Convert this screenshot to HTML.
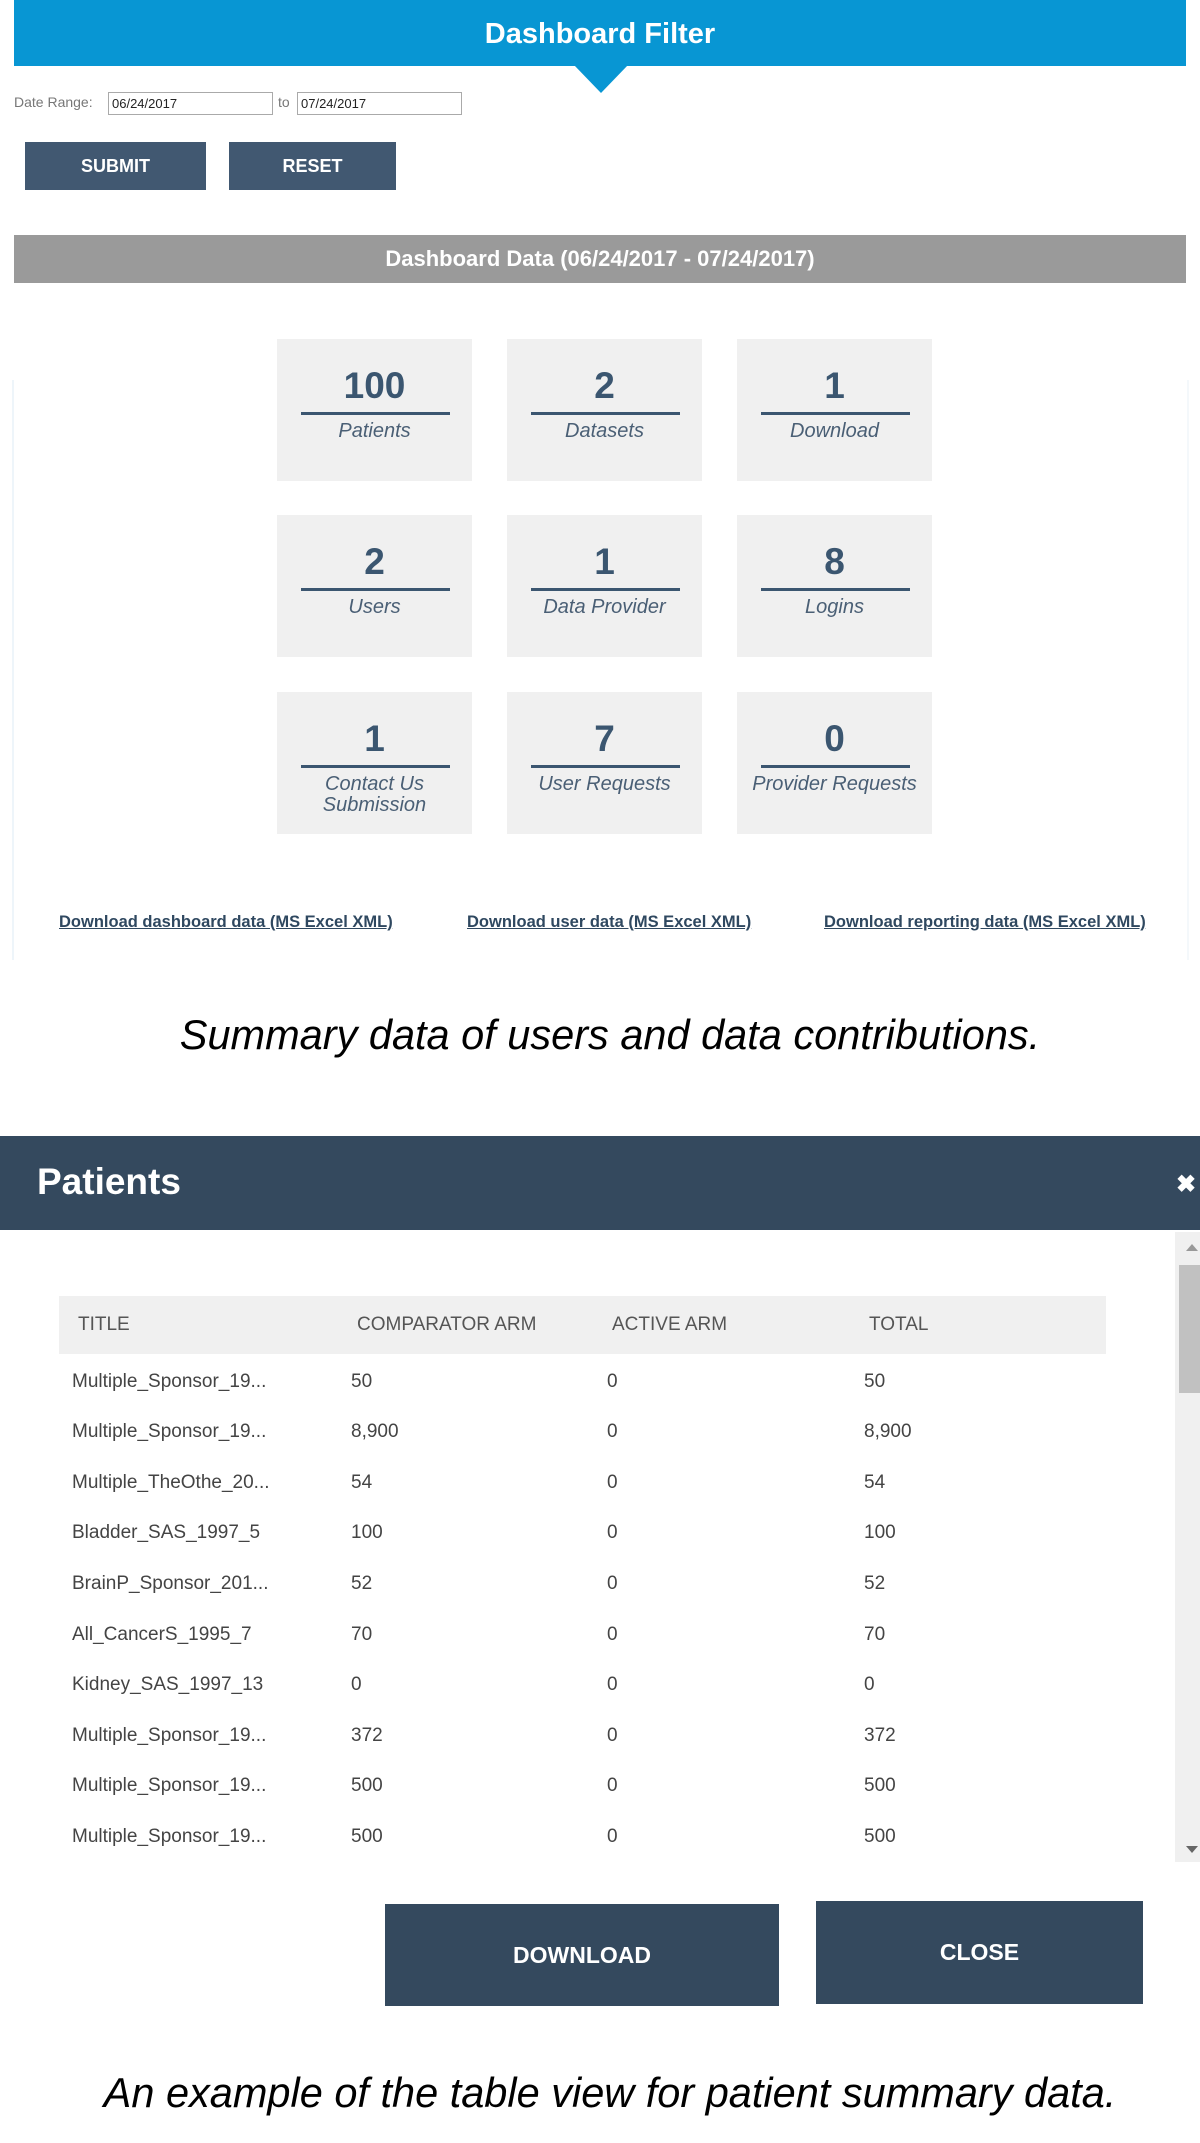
<!DOCTYPE html>
<html><head><meta charset="utf-8"><style>
body{margin:0;width:1200px;height:2143px;position:relative;background:#fff;font-family:"Liberation Sans",sans-serif;overflow:hidden}
.a{position:absolute;white-space:nowrap}
.tile{position:absolute;width:195px;height:142px;background:#f0f0f0}
.tile .n{position:absolute;left:0;right:0;top:25px;text-align:center;font-weight:bold;font-size:37px;color:#3b5670;line-height:44px}
.tile .l{position:absolute;left:24px;width:149px;top:73px;height:3px;background:#3b5670}
.tile .t{position:absolute;left:0;right:0;top:82px;text-align:center;font-style:italic;font-size:20px;color:#4a5f75;line-height:21px}
.btn{position:absolute;background:#415871;color:#fff;font-weight:bold;font-size:18px;text-align:center}
.link{position:absolute;top:913px;font-size:16.5px;font-weight:bold;color:#2f4860;text-decoration:underline;white-space:nowrap}
.r{position:absolute;font-size:19px;color:#444;white-space:nowrap;line-height:24px}
.h{position:absolute;font-size:19px;color:#555;top:1313px;line-height:24px}
.mb{position:absolute;background:#34495e;color:#fff;font-weight:bold;font-size:23px;text-align:center}
</style></head><body>
<div class="a" style="left:14px;top:0;width:1172px;height:66px;background:#0896d3"></div>
<div class="a" style="left:14px;top:1px;width:1172px;line-height:66px;text-align:center;color:#fff;font-weight:bold;font-size:29px">Dashboard Filter</div>
<div class="a" style="left:574px;top:65px;width:0;height:0;border-left:27px solid transparent;border-right:27px solid transparent;border-top:28px solid #0896d3"></div>

<div class="a" style="left:14px;top:94px;font-size:14px;color:#777">Date Range:</div>
<div class="a" style="left:108px;top:92px;border:1px solid #aaa;font-size:13px;line-height:21px;padding-left:3px;box-sizing:border-box;width:165px;height:23px;color:#222">06/24/2017</div>
<div class="a" style="left:278px;top:94px;font-size:14px;color:#777">to</div>
<div class="a" style="left:297px;top:92px;width:165px;height:23px;border:1px solid #aaa;font-size:13px;line-height:21px;padding-left:3px;box-sizing:border-box;color:#222">07/24/2017</div>

<div class="btn" style="left:25px;top:142px;width:181px;height:48px;line-height:48px">SUBMIT</div>
<div class="btn" style="left:229px;top:142px;width:167px;height:48px;line-height:48px">RESET</div>

<div class="a" style="left:14px;top:235px;width:1172px;height:48px;background:#9a9a9a;color:#fff;font-weight:bold;font-size:22px;line-height:48px;text-align:center">Dashboard Data (06/24/2017 - 07/24/2017)</div>

<div class="a" style="left:12px;top:380px;width:2px;height:580px;background:#eef5fa"></div>
<div class="a" style="left:1187px;top:380px;width:2px;height:580px;background:#f4f8fb"></div>

<div class="tile" style="left:277px;top:339px"><div class="n">100</div><div class="l"></div><div class="t">Patients</div></div>
<div class="tile" style="left:507px;top:339px"><div class="n">2</div><div class="l"></div><div class="t">Datasets</div></div>
<div class="tile" style="left:737px;top:339px"><div class="n">1</div><div class="l"></div><div class="t">Download</div></div>
<div class="tile" style="left:277px;top:515px"><div class="n">2</div><div class="l"></div><div class="t">Users</div></div>
<div class="tile" style="left:507px;top:515px"><div class="n">1</div><div class="l"></div><div class="t">Data Provider</div></div>
<div class="tile" style="left:737px;top:515px"><div class="n">8</div><div class="l"></div><div class="t">Logins</div></div>
<div class="tile" style="left:277px;top:692px"><div class="n">1</div><div class="l"></div><div class="t">Contact Us<br>Submission</div></div>
<div class="tile" style="left:507px;top:692px"><div class="n">7</div><div class="l"></div><div class="t">User Requests</div></div>
<div class="tile" style="left:737px;top:692px"><div class="n">0</div><div class="l"></div><div class="t">Provider Requests</div></div>

<div class="link" style="left:59px">Download dashboard data (MS Excel XML)</div>
<div class="link" style="left:467px">Download user data (MS Excel XML)</div>
<div class="link" style="left:824px">Download reporting data (MS Excel XML)</div>

<div class="a" style="left:0;width:1220px;top:1011px;text-align:center;font-style:italic;font-size:41.5px;color:#000">Summary data of users and data contributions.</div>

<div class="a" style="left:0;top:1136px;width:1200px;height:94px;background:#34495e"></div>
<div class="a" style="left:37px;top:1158px;color:#fff;font-weight:bold;font-size:37px;line-height:48px">Patients</div>
<div class="a" style="left:1176px;top:1170px;color:#fff;font-weight:bold;font-size:24px">&#x2716;</div>

<div class="a" style="left:1175px;top:1232px;width:25px;height:630px;background:#f0f0f0"></div>
<div class="a" style="left:1179px;top:1265px;width:21px;height:128px;background:#c1c1c1"></div>
<div class="a" style="left:1186px;top:1244px;width:0;height:0;border-left:6px solid transparent;border-right:6px solid transparent;border-bottom:7px solid #999"></div>
<div class="a" style="left:1186px;top:1846px;width:0;height:0;border-left:6px solid transparent;border-right:6px solid transparent;border-top:7px solid #666"></div>

<div class="a" style="left:59px;top:1296px;width:1047px;height:58px;background:#f0f0f0"></div>
<div class="h" style="left:78px">TITLE</div>
<div class="h" style="left:357px">COMPARATOR ARM</div>
<div class="h" style="left:612px">ACTIVE ARM</div>
<div class="h" style="left:869px">TOTAL</div>

<div class="r" style="left:72px;top:1370px">Multiple_Sponsor_19...</div><div class="r" style="left:351px;top:1370px">50</div><div class="r" style="left:607px;top:1370px">0</div><div class="r" style="left:864px;top:1370px">50</div>
<div class="r" style="left:72px;top:1420px">Multiple_Sponsor_19...</div><div class="r" style="left:351px;top:1420px">8,900</div><div class="r" style="left:607px;top:1420px">0</div><div class="r" style="left:864px;top:1420px">8,900</div>
<div class="r" style="left:72px;top:1471px">Multiple_TheOthe_20...</div><div class="r" style="left:351px;top:1471px">54</div><div class="r" style="left:607px;top:1471px">0</div><div class="r" style="left:864px;top:1471px">54</div>
<div class="r" style="left:72px;top:1521px">Bladder_SAS_1997_5</div><div class="r" style="left:351px;top:1521px">100</div><div class="r" style="left:607px;top:1521px">0</div><div class="r" style="left:864px;top:1521px">100</div>
<div class="r" style="left:72px;top:1572px">BrainP_Sponsor_201...</div><div class="r" style="left:351px;top:1572px">52</div><div class="r" style="left:607px;top:1572px">0</div><div class="r" style="left:864px;top:1572px">52</div>
<div class="r" style="left:72px;top:1623px">All_CancerS_1995_7</div><div class="r" style="left:351px;top:1623px">70</div><div class="r" style="left:607px;top:1623px">0</div><div class="r" style="left:864px;top:1623px">70</div>
<div class="r" style="left:72px;top:1673px">Kidney_SAS_1997_13</div><div class="r" style="left:351px;top:1673px">0</div><div class="r" style="left:607px;top:1673px">0</div><div class="r" style="left:864px;top:1673px">0</div>
<div class="r" style="left:72px;top:1724px">Multiple_Sponsor_19...</div><div class="r" style="left:351px;top:1724px">372</div><div class="r" style="left:607px;top:1724px">0</div><div class="r" style="left:864px;top:1724px">372</div>
<div class="r" style="left:72px;top:1774px">Multiple_Sponsor_19...</div><div class="r" style="left:351px;top:1774px">500</div><div class="r" style="left:607px;top:1774px">0</div><div class="r" style="left:864px;top:1774px">500</div>
<div class="r" style="left:72px;top:1825px">Multiple_Sponsor_19...</div><div class="r" style="left:351px;top:1825px">500</div><div class="r" style="left:607px;top:1825px">0</div><div class="r" style="left:864px;top:1825px">500</div>

<div class="mb" style="left:385px;top:1904px;width:394px;height:102px;line-height:102px">DOWNLOAD</div>
<div class="mb" style="left:816px;top:1901px;width:327px;height:103px;line-height:103px">CLOSE</div>

<div class="a" style="left:0;width:1220px;top:2069px;text-align:center;font-style:italic;font-size:41.5px;color:#000">An example of the table view for patient summary data.</div>
</body></html>
